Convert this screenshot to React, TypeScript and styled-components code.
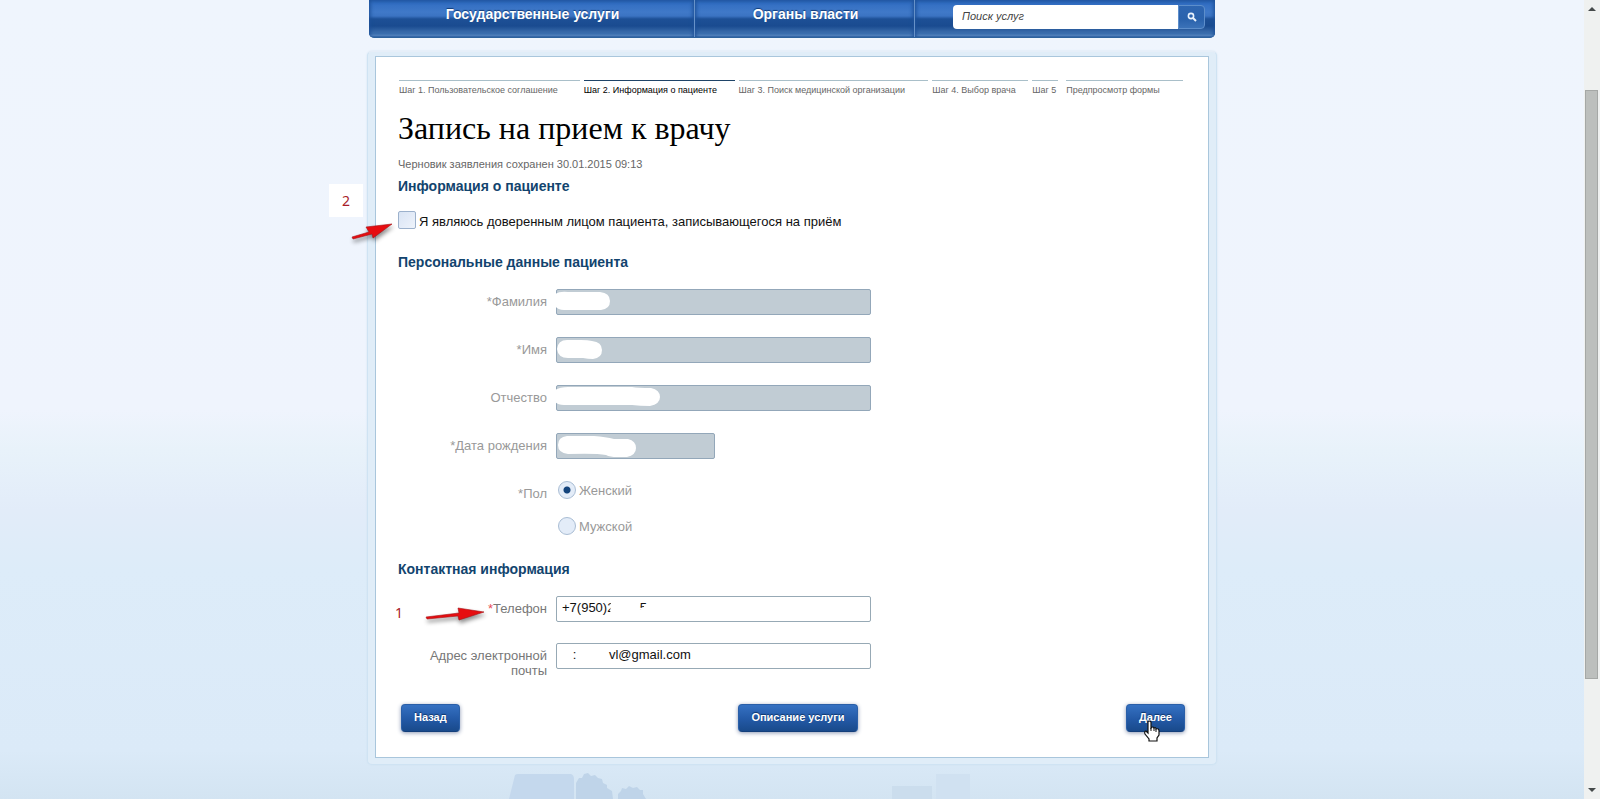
import React from "react";
import styled, { createGlobalStyle, css } from "styled-components";

const GlobalStyle = createGlobalStyle`
  *, *::before, *::after { box-sizing: border-box; }
  body {
    margin: 0;
    font-family: "Liberation Sans", Arial, sans-serif;
    font-size: 13px;
    line-height: 15px;
    color: #111;
    background: #d4e5f3;
  }
  button, input { font: inherit; }
`;

const Shell = styled.div`
  display: flex;
  min-height: 100vh;
`;

const Page = styled.div`
  flex: 1;
  min-width: 0;
  display: flex;
  flex-direction: column;
  align-items: center;
  background: linear-gradient(
    #eff5fd 0, #eff4fd 410px, #e8f2fa 450px, #e2ecf9 510px,
    #ddecf9 570px, #dbeaf8 750px, #d3e4f2 799px
  );
`;

const NavBar = styled.header`
  display: grid;
  grid-template-columns: 325fr 220fr 301fr;
  width: 100%;
  max-width: 846px;
  height: 38px;
  border-bottom: 1px solid #2d629c;
  border-radius: 0 0 5px 5px;
  overflow: hidden;
  background: #1d5096;
`;

const navSurface = css`
  background: linear-gradient(
    #2d6ac0 0, #4079c8 12px, #3b73c2 16px, #1d5096 19px,
    #1a4b90 26px, #4174b2 34px, #86b0dd 36px, #3f76b6 37px
  );
  border-left: 1px solid #6792c8;
  box-shadow: inset 1px 0 4px #1f5299, inset -1px 0 4px #1f5299;
`;

const NavLinks = styled.nav`
  display: contents;
`;

const NavLink = styled.a`
  ${navSurface}
  display: flex;
  justify-content: center;
  padding: 6px 0 0 2px;
  color: #fff;
  font-size: 14px;
  line-height: 16px;
  font-weight: bold;
  text-decoration: none;
  text-shadow: 0 -1px 1px #123c78;
  &:first-child { border-left: 0; }
`;

const Search = styled.form`
  ${navSurface}
  padding: 5px 10px 8px 38px;
  display: flex;
`;

const SearchInput = styled.input`
  flex: 1;
  min-width: 0;
  height: 24px;
  border: 0;
  border-radius: 4px 0 0 4px;
  padding: 0 9px 2px;
  background: #fff;
  font-size: 11px;
  font-style: italic;
  outline: 0;
  &::placeholder { color: #444; opacity: 1; }
`;

const SearchButton = styled.button`
  width: 27px;
  height: 24px;
  padding: 0;
  display: grid;
  place-items: center;
  border: 1px solid #5d8ecb;
  border-radius: 0 4px 4px 0;
  background: linear-gradient(#2e66b2, #2a62ac 60%, #3b72b8);
`;

const Frame = styled.main`
  width: 100%;
  max-width: 850px;
  margin-top: 13px;
  padding: 4px 7px 6px;
  border: 1px solid #cfe3f3;
  border-top-color: #e6eef8;
  border-radius: 5px;
  background: #e0edf8;
  box-shadow: 0 0 2px #cfe1ef;
`;

const Card = styled.form`
  border: 1px solid #a9c6dc;
  background: #fff;
  padding: 23px 22px 25px;
`;

const Steps = styled.ol`
  display: flex;
  gap: 4px;
  margin: 0;
  padding: 0 3px 0 1px;
  list-style: none;
`;

const Step = styled.li<{ $share: number; $active?: boolean; $apart?: boolean }>`
  flex: ${(p) => p.$share} 1 0;
  margin-left: ${(p) => (p.$apart ? 4 : 0)}px;
  border-top: 1px solid ${(p) => (p.$active ? "#1f4468" : "#a9bfc9")};
  padding-top: 4px;
  color: ${(p) => (p.$active ? "#000" : "#666")};
  font-size: 9px;
  line-height: 11px;
  white-space: nowrap;
`;

const Title = styled.h1`
  margin: 14px 0 0;
  font-family: Georgia, "Liberation Serif", serif;
  font-size: 32px;
  line-height: 36px;
  font-weight: normal;
  color: #000;
`;

const Draft = styled.p`
  margin: 11px 0 0;
  color: #666;
  font-size: 11px;
  line-height: 14px;
`;

const Heading = styled.h2<{ $gap: number }>`
  margin: ${(p) => p.$gap}px 0 0;
  color: #12446e;
  font-size: 14px;
  line-height: 16px;
  font-weight: bold;
`;

const Consent = styled.div`
  position: relative;
  display: flex;
  align-items: center;
  gap: 3px;
  height: 18px;
  margin-top: 17px;
  label { padding-top: 2px; }
`;

const Checkbox = styled.input`
  appearance: none;
  width: 18px;
  height: 18px;
  margin: 0;
  border: 1px solid #9cb1cc;
  border-radius: 2px;
  background: linear-gradient(135deg, #d9e4f4, #eef3fb);
`;

const Fields = styled.div<{ $gap: number }>`
  display: flex;
  flex-direction: column;
  gap: ${(p) => p.$gap}px;
  margin-top: 19px;
`;

const Row = styled.div`
  position: relative;
  display: grid;
  grid-template-columns: 149px minmax(0, 1fr);
  column-gap: 9px;
  align-items: start;
  min-height: 26px;
`;

const Label = styled.label<{ $muted?: boolean }>`
  padding-top: 5px;
  text-align: right;
  color: ${(p) => (p.$muted ? "#999" : "#777")};
`;

const Star = styled.span<{ $red?: boolean }>`
  color: ${(p) => (p.$red ? "#e8505a" : "inherit")};
`;

const FieldBox = styled.div<{ $short?: boolean }>`
  position: relative;
  width: 100%;
  max-width: ${(p) => (p.$short ? 159 : 315)}px;
  height: 26px;
`;

const TextInput = styled.input`
  display: block;
  width: 100%;
  height: 26px;
  padding: 0 5px 3px;
  border: 1px solid #97a9b5;
  border-radius: 2px;
  background: #fff;
  color: #111;
  outline: 0;
  &:disabled { background: #c1ccd4; border-color: #93a7b9; }
`;

const Cover = styled.svg`
  position: absolute;
  left: 0;
  top: 0;
  overflow: visible;
  pointer-events: none;
`;

const Radios = styled.div`
  display: flex;
  flex-direction: column;
  gap: 18px;
  padding-left: 2px;
  color: #999;
`;

const RadioLine = styled.label`
  display: flex;
  align-items: center;
  gap: 3px;
`;

const Radio = styled.input`
  appearance: none;
  width: 18px;
  height: 18px;
  margin: 0;
  border: 1px solid #a9bdd4;
  border-radius: 50%;
  background: #e3ecf8;
  &:checked { background: radial-gradient(circle, #14447c 0 3px, #e3ecf8 4px); }
`;

const Actions = styled.div`
  display: grid;
  grid-template-columns: 338fr auto 328fr;
  margin-top: 26px;
  padding: 0 1px 0 3px;
`;

const ActionButton = styled.button<{ $side?: "start" | "end" }>`
  position: relative;
  justify-self: ${(p) => p.$side ?? "center"};
  height: 28px;
  padding: 0 12px 2px;
  border: 1px solid #2a5fa8;
  border-bottom-color: #143f7b;
  border-radius: 4px;
  background: linear-gradient(#3571c2, #2359a6 55%, #194a8b);
  box-shadow: 0 1px 4px #8d99b5;
  color: #fff;
  font-size: 11px;
  font-weight: bold;
  text-shadow: 0 -1px 1px #0e3468;
`;

const Pointer = styled.svg`
  position: absolute;
  left: 16px;
  top: 15px;
`;

const Arrow = styled.svg<{ $x: number; $y: number }>`
  position: absolute;
  left: ${(p) => p.$x}px;
  top: ${(p) => p.$y}px;
  overflow: visible;
  filter: drop-shadow(1px 3px 2px rgba(0, 0, 0, 0.45));
`;

const Mark = styled.span<{ $x: number; $y: number; $boxed?: boolean }>`
  position: absolute;
  left: ${(p) => p.$x}px;
  top: ${(p) => p.$y}px;
  display: grid;
  place-items: center;
  width: ${(p) => (p.$boxed ? 34 : 10)}px;
  height: ${(p) => (p.$boxed ? 33 : 16)}px;
  background: #fff;
  color: #a81c28;
  font-family: "Noto Sans", sans-serif;
  font-size: 14px;
  line-height: 16px;
`;

const Skyline = styled.svg`
  display: block;
  width: 100%;
  max-width: 850px;
  height: 34px;
`;

const ScrollTrack = styled.div`
  position: sticky;
  top: 0;
  width: 16px;
  height: 100vh;
  display: flex;
  flex-direction: column;
  align-items: center;
  background: #eff1f0;
  padding: 7px 2px 7px 1px;
`;

const ScrollThumb = styled.div`
  width: 13px;
  height: 75%;
  margin: 79px 0 auto;
  border: 1px solid #a5a8a6;
  background: #bcbfbd;
`;

function ScrollArrow({ down }: { down?: boolean }) {
  return (
    <svg width="8" height="4" viewBox="0 0 8 4" aria-hidden="true">
      <path d={down ? "M0 0H8L4 4Z" : "M0 4H8L4 0Z"} fill="#454a4a" />
    </svg>
  );
}

const personal = [
  { id: "surname", label: "Фамилия", required: true, short: false, cover: "M-1 5Q4 2 12 3H44Q54 4 54 12T45 21H8Q2 21 -1 17Z" },
  { id: "name", label: "Имя", required: true, short: false, cover: "M1 12Q2 3 11 3H25Q32 3 36 4Q46 5 46 13T37 22Q32 22 27 21H12Q2 21 1 12Z" },
  { id: "patronymic", label: "Отчество", required: false, short: false, cover: "M-1 5Q4 2 12 2H76Q82 3 95 3Q104 5 104 12T94 21Q84 21 76 20H8Q2 20 -1 17Z" },
  { id: "birthday", label: "Дата рождения", required: true, short: true, cover: "M2 12Q2 4 11 3H38Q50 4 58 6Q66 6 72 6Q80 8 80 15T71 24H61Q54 24 50 22Q40 20 12 21Q2 20 2 12Z" },
];

const steps = [
  { text: "Шаг 1. Пользовательское соглашение", share: 181 },
  { text: "Шаг 2. Информация о пациенте", share: 151, active: true },
  { text: "Шаг 3. Поиск медицинской организации", share: 190 },
  { text: "Шаг 4. Выбор врача", share: 96 },
  { text: "Шаг 5", share: 26 },
  { text: "Предпросмотр формы", share: 117, apart: true },
];

const nb = (n: number) => "\u00a0".repeat(n);

export default function App() {
  return (
    <>
      <GlobalStyle />
      <Shell>
        <Page>
          <NavBar>
            <NavLinks>
              <NavLink href="#services">Государственные услуги</NavLink>
              <NavLink href="#authorities">Органы власти</NavLink>
            </NavLinks>
            <Search role="search">
              <SearchInput aria-label="Поиск услуг" placeholder="Поиск услуг" />
              <SearchButton type="button" aria-label="Поиск">
                <svg width="10" height="10" viewBox="0 0 10 10" fill="none" stroke="#e9f2fd">
                  <circle cx="4" cy="4" r="2.6" strokeWidth="1.6" />
                  <path d="M6 6L9 9" strokeWidth="1.9" />
                </svg>
              </SearchButton>
            </Search>
          </NavBar>

          <Frame>
            <Card>
              <Steps>
                {steps.map((s) => (
                  <Step key={s.text} $share={s.share} $active={s.active} $apart={s.apart}>
                    {s.text}
                  </Step>
                ))}
              </Steps>
              <Title>Запись на прием к врачу</Title>
              <Draft>Черновик заявления сохранен 30.01.2015 09:13</Draft>
              <Heading $gap={7}>Информация о пациенте</Heading>
              <Consent>
                <Checkbox type="checkbox" id="trusted" />
                <label htmlFor="trusted">Я являюсь доверенным лицом пациента, записывающегося на приём</label>
                <Mark $x={-69} $y={-27} $boxed>2</Mark>
                <Arrow $x={-46} $y={13} width="42" height="18" viewBox="0 0 42 18" aria-hidden="true">
                  <path d="M0 13L17 8L14 3L40 0L21 14L20 10L1 15Z" fill="#e60d10" stroke="#a41015" strokeWidth="0.6" />
                </Arrow>
              </Consent>

              <Heading $gap={25}>Персональные данные пациента</Heading>
              <Fields $gap={22}>
                {personal.map((f) => (
                  <Row key={f.id}>
                    <Label htmlFor={f.id} $muted>
                      {f.required && <Star>*</Star>}
                      {f.label}
                    </Label>
                    <FieldBox $short={f.short}>
                      <TextInput id={f.id} disabled />
                      <Cover width="110" height="26" viewBox="0 0 110 26" aria-hidden="true">
                        <path d={f.cover} fill="#fff" />
                      </Cover>
                    </FieldBox>
                  </Row>
                ))}
                <Row role="radiogroup" aria-labelledby="sex">
                  <Label as="span" id="sex" $muted><Star>*</Star>Пол</Label>
                  <Radios>
                    <RadioLine>
                      <Radio type="radio" name="sex" defaultChecked />
                      Женский
                    </RadioLine>
                    <RadioLine>
                      <Radio type="radio" name="sex" />
                      Мужской
                    </RadioLine>
                  </Radios>
                </Row>
              </Fields>

              <Heading $gap={26}>Контактная информация</Heading>
              <Fields $gap={21}>
                <Row>
                  <Label htmlFor="phone"><Star $red>*</Star>Телефон</Label>
                  <FieldBox>
                    <TextInput id="phone" type="tel" defaultValue={"+7(950)2" + nb(7) + "5"} />
                    <Cover width="110" height="26" viewBox="0 0 110 26" aria-hidden="true">
                      <path d="M55 4H80V20H54Z M89 9H95V20H80V15L86 13Z" fill="#fff" />
                    </Cover>
                  </FieldBox>
                  <Mark $x={-4} $y={9}>1</Mark>
                  <Arrow $x={28} $y={11} width="58" height="16" viewBox="0 0 58 16" aria-hidden="true">
                    <path d="M0 10L33 6L32 1L58 5L33 13L32 9L1 12Z" fill="#e60d10" stroke="#a41015" strokeWidth="0.6" />
                  </Arrow>
                </Row>
                <Row>
                  <Label htmlFor="email">Адрес электронной почты</Label>
                  <FieldBox>
                    <TextInput id="email" type="text" defaultValue={nb(3) + ":" + nb(9) + "vl@gmail.com"} />
                  </FieldBox>
                </Row>
              </Fields>

              <Actions>
                <ActionButton type="button" $side="start">Назад</ActionButton>
                <ActionButton type="button">Описание услуги</ActionButton>
                <ActionButton type="button" $side="end">
                  Далее
                  <Pointer width="18" height="23" viewBox="0 0 18 23" aria-hidden="true">
                    <path
                      d="M5 2Q5 1 6 1T8 2V8Q10 6 11 8Q13 7 13 9Q16 8 16 11V15L14 18V21H6V19L2 14Q1 11 3 11L5 13Z"
                      fill="#fff" stroke="#111" strokeWidth="1.2"
                    />
                    <path d="M8 8V11M11 8V11M13 9V12" stroke="#111" />
                  </Pointer>
                </ActionButton>
              </Actions>
            </Card>
          </Frame>

          <Skyline viewBox="0 0 850 34" preserveAspectRatio="none" aria-hidden="true">
            <path d="M142 34L148 10Q149 9 151 9H204Q207 10 207 14V34Z" fill="#c4d8ed" />
            <path d="M209 34V18L212 13L215 13L217 9L221 8L224 11L228 10L231 13L235 14L236 18L240 20L240 23L245 26L246 34Z" fill="#bfd4e9" />
            <path d="M251 34V29L254 26L255 23L259 24L262 21L266 23L270 22L273 25L276 25L276 29L279 34Z" fill="#bfd4e9" />
            <path d="M525 34V21H565V34Z" fill="#cbdded" />
            <path d="M569 34V9H603V34Z" fill="#d0e1f1" />
          </Skyline>
        </Page>
        <ScrollTrack aria-hidden="true">
          <ScrollArrow />
          <ScrollThumb />
          <ScrollArrow down />
        </ScrollTrack>
      </Shell>
    </>
  );
}
